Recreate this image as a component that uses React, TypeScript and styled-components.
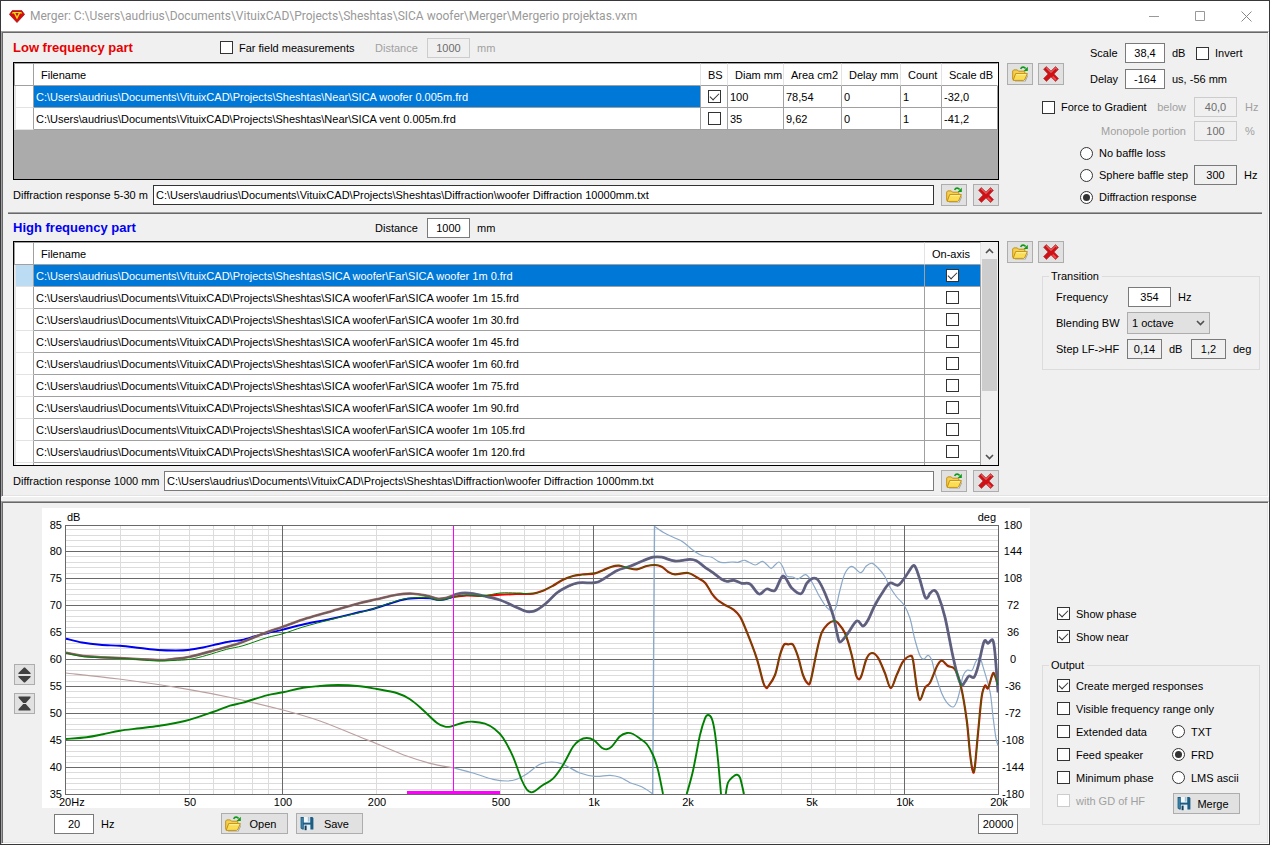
import React from "react";
import styled, { createGlobalStyle, css } from "styled-components";

const Global = createGlobalStyle`
  *, *::before, *::after { box-sizing: border-box; }
  body { margin: 0; background: #3a3a3e; }
  body, button, input, select, fieldset, table {
    font-family: "Liberation Sans", Arial, sans-serif;
    font-size: 11px;
    line-height: 14px;
    color: #000;
  }
`;

/* ---------- window frame ---------- */

const Window = styled.div`
  display: flex;
  flex-direction: column;
  min-height: 100vh;
  padding: 1px;
  background: #38383c;
`;

const TitleBar = styled.header`
  display: flex;
  align-items: center;
  height: 30px;
  padding-left: 8px;
  background: #fff;
`;

const Title = styled.h1`
  flex: 1;
  margin: 0 0 0 5px;
  font: 400 12px/16px Roboto, "Noto Sans", sans-serif;
  color: #999;
  white-space: nowrap;
`;

const CaptionButton = styled.button`
  display: flex;
  align-items: center;
  justify-content: center;
  width: 46px;
  height: 30px;
  padding: 0;
  border: 0;
  background: none;
`;

const Panel = styled.section`
  border: 1px solid;
  border-color: #a0a0a0 #fff #fff #a0a0a0;
  background: #f0f0f0;
  box-shadow: inset 1px 1px 0 #696969, inset -1px -1px 0 #e3e3e3;
`;

const Splitter = styled.div`
  height: 4px;
  background: #f0f0f0;
`;

const UpperPanel = styled(Panel)`
  padding: 1px;
`;

const Section = styled.section`
  display: flex;
  gap: 8px;
  padding: 0 6px 0 10px;
`;

const LowSection = styled(Section)`
  height: 179px;
`;

const HighSection = styled(Section)`
  height: 281px;
`;

const Divider = styled.hr`
  height: 2px;
  margin: 0 5px;
  border: 0;
  border-top: 1px solid #a0a0a0;
  background: #696969;
`;

const Main = styled.div`
  display: flex;
  flex: 1;
  flex-direction: column;
  min-width: 0;
`;

const Side = styled.aside`
  display: flex;
  flex-direction: column;
  width: 254px;
`;

const HeadRow = styled.div<{ $h: number }>`
  display: flex;
  align-items: center;
  height: ${(p) => p.$h}px;
`;

const Heading = styled.h2<{ $color: string; $w: number }>`
  width: ${(p) => p.$w}px;
  margin: 0;
  font-size: 13px;
  line-height: 16px;
  font-weight: 700;
  color: ${(p) => p.$color};
  white-space: nowrap;
`;

/* ---------- controls ---------- */

const tick = css`
  display: inline-grid;
  place-content: center;
  flex: none;
  width: 13px;
  height: 13px;
  margin: 0;
  appearance: none;
  border: 1px solid #333;
  background: #fff;
  &:disabled { border-color: #ccc; }
`;

const Check = styled.input.attrs({ type: "checkbox" })`
  ${tick}
  &:checked::after {
    content: "";
    width: 9px;
    height: 5px;
    margin-top: -3px;
    border: solid #333;
    border-width: 0 0 1px 1px;
    transform: rotate(-45deg);
  }
`;

const Radio = styled.input.attrs({ type: "radio" })`
  ${tick}
  border-radius: 50%;
  &:checked::after {
    content: "";
    width: 7px;
    height: 7px;
    border-radius: 50%;
    background: #333;
  }
`;

const Choice = styled.label<{ $off?: boolean; $w?: number }>`
  display: flex;
  align-items: center;
  gap: 6px;
  width: ${(p) => (p.$w ? p.$w + "px" : "auto")};
  color: ${(p) => (p.$off ? "#a0a0a0" : "#000")};
  white-space: nowrap;
`;

const Field = styled.input<{ $w?: number }>`
  width: ${(p) => p.$w ?? 43}px;
  height: 20px;
  padding: 0;
  border: 1px solid #7a7a7a;
  background: #fff;
  text-align: center;
  flex: none;
  &:read-only { background: #f0f0f0; }
  &:disabled { border-color: #ccc; background: #f0f0f0; color: #6d6d6d; }
`;

const PathField = styled.input<{ $dark?: boolean }>`
  flex: 1;
  min-width: 0;
  height: 20px;
  margin-right: 1px;
  padding: 0 2px;
  border: 1px solid ${(p) => (p.$dark ? "#333" : "#7a7a7a")};
  background: #fff;
`;

const Label = styled.label<{ $w?: number; $off?: boolean; $right?: boolean }>`
  width: ${(p) => (p.$w ? p.$w + "px" : "auto")};
  text-align: ${(p) => (p.$right ? "right" : "left")};
  color: ${(p) => (p.$off ? "#a0a0a0" : "#000")};
  white-space: nowrap;
`;

const Unit = styled.span<{ $off?: boolean; $w?: number }>`
  width: ${(p) => (p.$w ? p.$w + "px" : "auto")};
  margin-left: 7px;
  color: ${(p) => (p.$off ? "#a0a0a0" : "#000")};
  white-space: nowrap;
`;

const Button = styled.button<{ $w: number }>`
  display: flex;
  align-items: center;
  justify-content: center;
  flex: none;
  width: ${(p) => p.$w}px;
  height: 22px;
  padding: 0;
  border: 1px solid #adadad;
  background: #e1e1e1;
`;

const TextButton = styled(Button)`
  justify-content: flex-start;
  height: 21px;
  padding-left: 3px;
`;

const ButtonText = styled.span`
  flex: 1;
  padding-right: 4px;
  text-align: center;
`;

const ButtonPair = styled.div`
  display: flex;
  gap: 5px;
`;

const PathRow = styled.div`
  display: flex;
  align-items: center;
  gap: 6px;
  height: 22px;
  margin-top: 4px;
`;

/* ---------- data grids ---------- */

const GridBox = styled.div<{ $h: number }>`
  display: flex;
  height: ${(p) => p.$h}px;
  overflow: hidden;
  border: 1px solid #000;
  background: #ababab;
`;

const GridView = styled.div`
  flex: 1;
  min-width: 0;
  overflow: hidden;
`;

const Grid = styled.table`
  width: 100%;
  table-layout: fixed;
  border-collapse: separate;
  border-spacing: 0;
`;

const HeadCell = styled.th<{ $w?: number; $last?: boolean }>`
  width: ${(p) => (p.$w ? p.$w + "px" : "auto")};
  height: 23px;
  padding: 1px 0 0 7px;
  border-top: 1px solid #a0a0a0;
  border-right: 1px solid ${(p) => (p.$last ? "#fff" : "#e3e3e3")};
  border-bottom: 1px solid #a0a0a0;
  background: #fff;
  font-weight: 400;
  text-align: left;
  white-space: nowrap;
`;

const CornerCell = styled(HeadCell)`
  border-right-color: #a0a0a0;
  border-left: 1px solid #a0a0a0;
`;

const Cell = styled.td<{ $sel?: boolean; $mid?: boolean }>`
  height: 22px;
  padding: ${(p) => (p.$mid ? "0 0 1px" : "0 2px")};
  border-right: 1px solid #a0a0a0;
  border-bottom: 1px solid #a0a0a0;
  background: ${(p) => (p.$sel ? "#0078d7" : "#fff")};
  color: ${(p) => (p.$sel ? "#fff" : "#000")};
  text-align: ${(p) => (p.$mid ? "center" : "left")};
  white-space: nowrap;
  overflow: hidden;
  ${Check} { vertical-align: middle; }
`;

const RowHead = styled.td<{ $sel?: boolean }>`
  border-left: 2px solid #e3e3e3;
  border-right: 1px solid #a0a0a0;
  border-bottom: 1px solid #e3e3e3;
  background: ${(p) => (p.$sel ? "#bcdcf4" : "#fff")};
`;

const ScrollBar = styled.div`
  display: flex;
  flex-direction: column;
  width: 17px;
  background: #f0f0f0;
`;

const ScrollArrow = styled.button`
  display: flex;
  align-items: center;
  justify-content: center;
  height: 17px;
  padding: 0;
  border: 0;
  background: none;
`;

const ScrollTrack = styled.div`
  flex: 1;
`;

const ScrollThumb = styled.div`
  height: 132px;
  margin: 0 1px;
  background: #cdcdcd;
`;

/* ---------- side panels ---------- */

const TopRow = styled.div`
  display: flex;
  margin-top: 10px;
  ${ButtonPair} { margin-top: 20px; }
`;

const Levels = styled.div`
  display: flex;
  flex-direction: column;
  gap: 6px;
  margin-left: 26px;
`;

const Line = styled.div`
  display: flex;
  align-items: center;
  height: 20px;
`;

const Gradient = styled.div`
  display: grid;
  grid-template-columns: 144px 43px 1fr;
  row-gap: 4px;
  align-items: center;
  margin: 8px 0 1px 35px;
  column-gap: 8px;
`;

const GradientHead = styled.div`
  display: flex;
  justify-content: space-between;
`;

const Baffle = styled.div`
  display: grid;
  grid-template-columns: 114px 43px auto;
  grid-auto-rows: 22px;
  align-items: center;
  margin-left: 73px;
`;

const Group = styled.fieldset`
  min-width: 0;
  margin: 0;
  padding: 0;
  border: 1px solid #dcdcdc;
`;

const Legend = styled.legend`
  margin-left: 6px;
  padding: 0 3px 0 2px;
  line-height: 13px;
`;

const Transition = styled(Group)`
  height: 100px;
  margin: 7px 1px 0 35px;
`;

const TransitionLines = styled.div`
  display: grid;
  grid-auto-rows: 22px;
  row-gap: 4px;
  margin: 4px 0 0 13px;
`;

const SelectBox = styled.span`
  display: grid;
  align-items: center;
  width: 83px;
  height: 22px;
  border: 1px solid #adadad;
  background: #e1e1e1;
  svg, select { grid-area: 1 / 1; }
  svg { justify-self: end; margin-right: 4px; pointer-events: none; }
`;

const Select = styled.select`
  width: 100%;
  height: 20px;
  padding: 0 4px;
  border: 0;
  appearance: none;
  background: none;
`;

/* ---------- lower panel ---------- */

const LowerPanel = styled(Panel)`
  display: flex;
  flex: 1;
  padding: 6px 8px 8px 12px;
  align-items: flex-start;
`;

const ZoomButtons = styled.div`
  display: flex;
  flex-direction: column;
  gap: 8px;
  width: 28px;
  margin-top: 156px;
`;

const SquareButton = styled(Button)`
  height: 21px;
`;

const ChartArea = styled.div`
  flex: 1;
  min-width: 0;
  margin-right: 12px;
`;

const ChartSvg = styled.svg`
  display: block;
  width: 100%;
  background: #fff;
  text { font-size: 11px; fill: #000; }
`;

const ChartFoot = styled.div`
  display: flex;
  align-items: center;
  height: 21px;
  margin-top: 5px;
  padding: 0 12px;
`;

const FileButtons = styled.div`
  display: flex;
  flex: 1;
  gap: 8px;
  margin-left: 107px;
`;

const Options = styled.aside`
  width: 218px;
  padding-top: 94px;
`;

const ShowList = styled.div`
  display: grid;
  grid-auto-rows: 23px;
  align-items: center;
  margin: 0 0 11px 15px;
`;

const Output = styled(Group)`
  height: 166px;
`;

const OutputGrid = styled.div`
  display: grid;
  grid-template-columns: 115px auto;
  grid-auto-rows: 23px;
  align-items: center;
  margin: 2px 0 0 14px;
`;

const Wide = styled.div`
  grid-column: 1 / 3;
`;

const MergeSlot = styled.div`
  padding: 6px 0 0 1px;
`;

/* ---------- icons ---------- */

const FolderIcon = () => (
  <svg width="17" height="16" viewBox="0 0 17 16" aria-hidden="true">
    <path d="M3 14.9H12.6L16 8.6v1.6L13.6 15.6H3Z" fill="#a8a8a8" />
    <path d="M.7 13.6V5L1.7 3.9h3.6l1.2 1.3h6.3v2.2" fill="#f3cf55" stroke="#c4920f" />
    <path d="M3.6 7.6H15.4L12.9 13.2 11.6 14.4H1.2Z" fill="#fbdc55" stroke="#c4920f" strokeLinejoin="round" />
    <path d="M4.3 8.7h9.6" stroke="#fff3a6" />
    <path d="M8.6 2.8C9.8.6 12.2.6 13.6 2.4" fill="none" stroke="#0d9a16" strokeWidth="1.6" />
    <path d="M15.8.8v4.2h-4.2Z" fill="#0d9a16" />
  </svg>
);

const DeleteIcon = () => (
  <svg width="18" height="18" viewBox="0 0 18 18" aria-hidden="true">
    <path
      d="M4.2 1.6 9 6 13.6 1.6 16.4 4.4 12.1 9l4.4 4.6-2.9 2.9L9 12.1 4.4 16.4 1.6 13.6 6 9 1.6 4.3Z"
      fill="#cf1015"
      stroke="#b5474a"
      strokeWidth=".9"
      strokeLinejoin="round"
    />
    <path d="M4.2 2.8 9 7.3l4.6-4.4 1.4 1.4" fill="none" stroke="#e05a5c" strokeWidth="1.2" />
    <path d="M14 15 10.6 11.6" stroke="#f4474a" strokeWidth="1.8" />
  </svg>
);

const SaveIcon = () => (
  <svg width="14" height="15" viewBox="0 0 14 15" aria-hidden="true">
    <path d="M1 1h11.4L13.4 2v11.6H2.2L.6 12.2V1.4Z" fill="#1c5d85" />
    <path d="M1.6 2v9.8l1 .8V2Z" fill="#4f94bb" />
    <path d="M3.8 1h6.4v5.6H3.8Z" fill="#f2f7fa" />
    <path d="M7.8 1h1.8v4.6H7.8Z" fill="#a8c4d4" />
    <path d="M3.8 8.6h6.6v5.6H3.8Z" fill="#e4eef4" />
    <path d="M4.6 9.6h2v4.6h-2Z" fill="#153c56" />
  </svg>
);

const SpreadIcon = () => (
  <svg width="13" height="16" viewBox="0 0 13 16" aria-hidden="true">
    <path d="M6 .5h1L12.6 6v1H.4V6ZM.4 9h12.2v1L7 15.5H6L.4 10Z" fill="#404040" />
  </svg>
);

const SqueezeIcon = () => (
  <svg width="13" height="15" viewBox="0 0 13 15" aria-hidden="true">
    <path d="M.5.5h12v1.3L7.8 7H5.2L.5 1.8ZM5.2 8h2.6l4.7 5.2v1.3H.5v-1.3Z" fill="#404040" />
  </svg>
);

const AppIcon = () => (
  <svg width="16" height="13" viewBox="0 0 16 13" aria-hidden="true">
    <path d="M3.2.6h9.6L15.6 4.4 8 12.6.4 4.4Z" fill="#d40c0c" stroke="#8d0606" strokeWidth=".6" />
    <path d="M3.8 2h8.4l1.2 1.6H11L8 9.6 5 3.6H2.6Z" fill="#f3d81c" />
    <path d="M6.4 3h3.2L8 6.6Z" fill="#c80f0f" />
  </svg>
);

const Chevron = ({ up }: { up?: boolean }) => (
  <svg width="9" height="6" viewBox="0 0 9 6" aria-hidden="true">
    <path d={up ? "M1 5 4.5 1.5 8 5" : "M1 1 4.5 4.5 8 1"} fill="none" stroke="#505050" strokeWidth="1.6" />
  </svg>
);

/* ---------- response chart ---------- */

type Pt = [number, number];

const PLOT = { left: 65, right: 998, top: 525, bottom: 794 };
const DECADE = 311;
const xOf = (hz: number) => PLOT.left + DECADE * Math.log10(hz / 20);
const yOf = (db: number) => (db === 85 ? PLOT.top : PLOT.bottom - (db - 35) * 5.4);

const parse = (s: string): Pt[] =>
  s.trim().split(/\s+/).map((p) => p.split(",").map(Number) as Pt);

/* Catmull-Rom spline through the sampled points */
const smooth = (s: string) => {
  const p = parse(s);
  let d = `M${p[0][0]} ${p[0][1]}`;
  for (let i = 0; i < p.length - 1; i++) {
    const a = p[Math.max(i - 1, 0)];
    const b = p[i];
    const c = p[i + 1];
    const e = p[Math.min(i + 2, p.length - 1)];
    const n = (v: number) => v.toFixed(1);
    d += `C${n(b[0] + (c[0] - a[0]) / 6)} ${n(b[1] + (c[1] - a[1]) / 6)} ${n(c[0] - (e[0] - b[0]) / 6)} ${n(
      c[1] - (e[1] - b[1]) / 6
    )} ${c[0]} ${c[1]}`;
  }
  return d;
};

const highLeft = smooth(
  "66,638.7 82,642.5 100,644.7 120,645.8 140,648 158,650 176,650.5 188,650 203,647.5 218,644 230,641.5 242,640 256,636 268,633 282,629.8 305,624 333,618.5 360,612 373,609 390,603.5 405,599.3 420,598 430,598.3 440,600 453,597"
);
const nearLeft = smooth(
  "66,653.3 86.7,657 119,658.3 140,659.8 158,661 173,660.5 190,659.3 206.7,655.3 226.7,649.3 243,645.7 266.7,637.7 283,633.7 303,627 333,619 360,612.5 373,609 390,603 405,598.7 420,597.4 430,598 440,600.3 453,597"
);
const mergedLeft = smooth(
  "66,652.7 86.7,656.3 119,658 158,660 173,659 190,656.7 213,650.7 240,643 266.7,632.3 283,626.7 306.7,618.3 333,610.7 360,603 376.7,599.3 396.7,594.7 413,593.7 426.7,595.7 438,598.7 446.7,597.7 453,595.5"
);
const mergedRight = smooth(
  "453,595.5 456.7,594 465,593 473,593.7 486.7,596.7 500,600 513,605.7 525,611 530.7,611.7 536.7,610 546.7,602.7 556.7,593 566.7,587 578,582.9 595,582.7 603,579.3 616.7,570.7 630,566.3 643,560.7 653,557.2 661.7,557.2 675,561 690,559.3 696.7,561 705,567.3 713,572.7 721.7,579.3 727,581.3 734,580.3 741.7,583.3 750,584 759,594 766.7,589 775,590.3 783,576 791.7,588 801,593.7 806.7,583.3 812.7,578.3 818,580 825,593.3 833,615 837,633 840,642 846.7,635 856.7,621 863,626 868,620 875,605 883,591.7 890,583 898,585.3 905,577.3 912.7,566 916,568.3 920,580 925,597 928,597 930,593.3 934,590.3 938,595 945,617.3 953,656.7 958,676.7 961.7,685 965,681.7 969,676 974,677.3 978,666.7 984,641.7 988,643.3 992.7,640 995,653.3 998,692.3"
);
const lowHead = "453,597 466.7,595.3 483,596";
const lowTail =
  "533,593.7 543,590.7 553,585.7 563,579.7 573,576 582,574.5 595,573.3 603,570.3 611.7,566.7 619,565.7 628,568 637,569.3 646.7,566 655,565 661.7,566.7 668,571.7 675,574.3 688,573 696.7,577.3 705,582.7 711.7,593.3 716.7,599.3 725,605 733,609.3 740,616.7 746.7,631.7 756.7,658.3 763,681.7 766,687.5 768,686.7 775,675 780,655 784,644.7 788.5,644.4 793,644.7 798,656.7 803,675 807.7,683.3 810.7,680.7 816.7,651.7 821.7,632.7 828,624 834,621 838,623 845,633.3 851.7,655 856,675 859,679.3 861.7,675 866.7,658.3 872,653 878,657.7 885,673.3 890.7,688 896.7,675 903,661.7 910,656 913,660 916.7,686.7 920,700 925,687.7 930,682.7 936.7,666.7 941.7,660.7 948,666 955,669.3 961,686.7 966.7,720 970,753.3 972.7,770.7 974.7,768 978,733.3 981.7,696.7 985,685.7 988,688.3 991.7,676.7 994,673.3 998,685";
const lowRight = smooth(`${lowHead} 500,594.7 516.7,594 ${lowTail}`);
const nearRight = smooth(`${lowHead} 500,593 516.7,593 ${lowTail}`);
const green = [
  "66,739 86.7,737.3 103,734.3 120,730.7 140,728.3 158,726 176.7,722.7 190,719.7 213,712 230,705.7 243,702.7 266.7,695.3 283,692.3 303,687.7 320,686 338,685 360,686.3 376.7,689 396.7,693 410,699.3 423,710 436.7,722.7 445,726.7 451.7,726.3 463,722.7 473,721.7 485,723.7 495,729.3 503,737.7 513,756.7 521.7,780 526.7,789.3 531,792.3 535,791 543,785 553,778.7 563,765 573,746.7 580,740 586.7,738 594,740.3 601.7,747.7 606.7,749.3 611.7,746.7 620,736.3 627,733 633,734 640,738.7 646.7,744 653,755 658,770 663,794",
  "686.7,794 693,770.7 700,735 705,718.3 708,715 711.7,718.3 715,733.3 718,760 721,794",
  "725.7,794 728,782.7 733,776.7 736.7,774.7 740,777.7 744,794",
].map(smooth);
const phaseLow = smooth(
  "66,673 119,679 188,689.3 233,698 283,710 320,721 360,737 376.7,743.7 406.7,756 430,763.3 453,767.7"
);
const phaseMid = smooth(
  "453,767.7 473,773 493,779.3 506.7,781 516.7,779.3 526.7,774 540,764.3 551.7,762 563,764.3 580,773 595,776.3 610,775.3 620,777.3 630,782.7 641.7,786.7 652.7,793.7"
);
const phaseHigh = smooth(
  "655,526.7 665,533.3 676.7,538.7 683,542 695,551.7 703,555.7 711.7,557.3 718,561.3 723,562.7 731.7,562 738,562.3 745,560.3 755,565 762.7,561.3 770.7,568.3 775,565 779,562 782.7,566.7 786.7,576 792.7,577 798,579 805.7,574.7 811.7,581.7 820,597.3 826.7,607.3 833,611 836,607 840,590 845,573.3 851.7,566.3 860.7,572.7 866,566.3 872,563.3 878,568 885,576.7 890,587.3 896.7,597 904,605 910,618.3 915,640 920,655.7 924,659 928,655.3 931.7,660 935,673.3 941.7,693.3 946.7,702.3 953,707 956.7,701.7 960,690 963,676 967,670.3 972,670.3 975.7,661.7 980,658 983,666.7 990,691.7 993,716.7 995.7,736.7 998,745.7"
);

const dbTicks = Array.from({ length: 51 }, (_, i) => 35 + i);
const hzTicks = [10, 100, 1000, 10000]
  .flatMap((base) => [1, 2, 3, 4, 5, 6, 7, 8, 9].map((m) => m * base))
  .filter((hz) => hz >= 20 && hz <= 20000);
const isDecade = (hz: number) => [20, 100, 1000, 10000, 20000].includes(hz);
const hzLabels: [number, string][] = [
  [50, "50"], [100, "100"], [200, "200"], [500, "500"], [1000, "1k"],
  [2000, "2k"], [5000, "5k"], [10000, "10k"], [20000, "20k"],
];

const Chart = () => {
  const hLine = (db: number) => {
    const y = Math.round(yOf(db)) + 0.5;
    return <path key={db} d={`M${PLOT.left} ${y}H${PLOT.right + 1}`} stroke={db % 5 ? "#dcdcdc" : "#696969"} />;
  };
  const vLine = (hz: number) => {
    const x = Math.round(xOf(hz)) + 0.5;
    return <path key={hz} d={`M${x} ${PLOT.top}V${PLOT.bottom + 1}`} stroke={isDecade(hz) ? "#696969" : "#dcdcdc"} />;
  };
  return (
    <ChartSvg viewBox="42 508 988 300" role="img" aria-label="Frequency response">
      <defs>
        <clipPath id="plot">
          <rect x={PLOT.left} y={PLOT.top} width={PLOT.right - PLOT.left + 1} height={PLOT.bottom - PLOT.top} />
        </clipPath>
      </defs>
      {dbTicks.filter((d) => d % 5).map(hLine)}
      {hzTicks.filter((h) => !isDecade(h)).map(vLine)}
      {dbTicks.filter((d) => d % 5 === 0).map(hLine)}
      {hzTicks.filter(isDecade).map(vLine)}
      <g clipPath="url(#plot)" fill="none" strokeLinejoin="round">
        <path d={phaseLow} stroke="#bca0a0" strokeWidth="1.2" />
        <path d={phaseMid} stroke="#8aa8c8" strokeWidth="1.2" />
        <path d="M652.7 794 654.5 526" stroke="#8aa8c8" strokeWidth="1.4" />
        <path d={phaseHigh} stroke="#8aa8c8" strokeWidth="1.2" />
        {green.map((d, i) => (
          <path key={i} d={d} stroke="#008000" strokeWidth="1.9" />
        ))}
        <path d={highLeft} stroke="#0000f0" strokeWidth="1.9" />
        <path d={lowRight} stroke="#f00000" strokeWidth="2.2" />
        <path d={mergedLeft} stroke="#b06464" strokeWidth="2.6" />
        <path d={mergedLeft} stroke="#656060" strokeWidth="1.6" />
        <path d={mergedRight} stroke="#6464b0" strokeWidth="2.8" />
        <path d={mergedRight} stroke="#606068" strokeWidth="1.7" />
        <path d={nearLeft} stroke="#008000" strokeWidth="1" />
        <path d={nearRight} stroke="#008000" strokeWidth="1" />
      </g>
      <rect x="453" y="526" width="1" height="265" fill="#ff00ff" />
      <rect x="407" y="791" width="93" height="3" fill="#ff00ff" />
      <text x="67" y="521">dB</text>
      <text x="996" y="521" textAnchor="end">deg</text>
      {dbTicks.filter((d) => d % 5 === 0).map((d) => (
        <text key={d} x="62" y={Math.round(yOf(d)) + 4} textAnchor="end">{d}</text>
      ))}
      {dbTicks.filter((d) => d % 5 === 0).map((d) => (
        <text key={d} x="1013" y={Math.round(yOf(d)) + 4} textAnchor="middle">{((d - 60) * 36) / 5}</text>
      ))}
      <text x="59" y="806">20Hz</text>
      {hzLabels.map(([hz, t]) => (
        <text key={hz} x={Math.round(xOf(hz)) + 1} y="806" textAnchor="middle">{t}</text>
      ))}
    </ChartSvg>
  );
};

/* ---------- data ---------- */

const ROOT = "C:\\Users\\audrius\\Documents\\VituixCAD\\Projects\\Sheshtas";

const nearFiles = [
  { file: "SICA woofer 0.005m.frd", bs: true, values: ["100", "78,54", "0", "1", "-32,0"] },
  { file: "SICA vent 0.005m.frd", bs: false, values: ["35", "9,62", "0", "1", "-41,2"] },
];
const nearColumns: [string, number][] = [
  ["Diam mm", 56], ["Area cm2", 58], ["Delay mm", 59], ["Count", 41], ["Scale dB", 56],
];
const farAngles = [0, 15, 30, 45, 60, 75, 90, 105, 120];

const OpenDelete = ({ what }: { what: string }) => (
  <>
    <Button $w={26} aria-label={`Open ${what}`}><FolderIcon /></Button>
    <Button $w={26} aria-label={`Delete ${what}`}><DeleteIcon /></Button>
  </>
);

const LowPart = () => (
  <LowSection>
    <Main>
      <HeadRow $h={29}>
        <Heading $color="#e60000" $w={207}>Low frequency part</Heading>
        <Choice $w={155}><Check /> Far field measurements</Choice>
        <Label $off htmlFor="lf-dist" $w={52}>Distance</Label>
        <Field id="lf-dist" disabled defaultValue="1000" />
        <Unit $off>mm</Unit>
      </HeadRow>
      <GridBox $h={118}>
        <GridView>
          <Grid>
            <thead>
              <tr>
                <CornerCell $w={20} aria-label="Row" />
                <HeadCell>Filename</HeadCell>
                <HeadCell $w={27}>BS</HeadCell>
                {nearColumns.map(([name, w], i) => (
                  <HeadCell key={name} $w={w} $last={i === 4}>{name}</HeadCell>
                ))}
              </tr>
            </thead>
            <tbody>
              {nearFiles.map((f, i) => (
                <tr key={f.file}>
                  <RowHead />
                  <Cell $sel={i === 0}>{`${ROOT}\\Near\\${f.file}`}</Cell>
                  <Cell $mid><Check defaultChecked={f.bs} aria-label="BS" /></Cell>
                  {f.values.map((v, k) => <Cell key={k}>{v}</Cell>)}
                </tr>
              ))}
            </tbody>
          </Grid>
        </GridView>
      </GridBox>
      <PathRow>
        <Label htmlFor="lf-path" $w={134}>Diffraction response 5-30 m</Label>
        <PathField id="lf-path" $dark defaultValue={`${ROOT}\\Diffraction\\woofer Diffraction 10000mm.txt`} />
        <OpenDelete what="near diffraction" />
      </PathRow>
    </Main>
    <Side>
      <TopRow>
        <ButtonPair><OpenDelete what="near files" /></ButtonPair>
        <Levels>
          <Line>
            <Label htmlFor="scale" $w={35}>Scale</Label>
            <Field id="scale" $w={40} defaultValue="38,4" />
            <Unit $w={17}>dB</Unit>
            <Unit><Choice><Check /> Invert</Choice></Unit>
          </Line>
          <Line>
            <Label htmlFor="delay" $w={35}>Delay</Label>
            <Field id="delay" $w={40} defaultValue="-164" />
            <Unit>us, -56 mm</Unit>
          </Line>
        </Levels>
      </TopRow>
      <Gradient>
        <GradientHead>
          <Choice><Check /> Force to Gradient</Choice>
          <Label $off htmlFor="below">below</Label>
        </GradientHead>
        <Field id="below" disabled defaultValue="40,0" />
        <Label $off as="span">Hz</Label>
        <Label $off $right htmlFor="mono">Monopole portion</Label>
        <Field id="mono" disabled defaultValue="100" />
        <Label $off as="span">%</Label>
      </Gradient>
      <Baffle>
        <Wide><Choice><Radio name="baffle" /> No baffle loss</Choice></Wide>
        <span />
        <Choice><Radio name="baffle" /> Sphere baffle step</Choice>
        <Field aria-label="Sphere baffle step frequency" readOnly defaultValue="300" />
        <Unit>Hz</Unit>
        <Wide><Choice><Radio name="baffle" defaultChecked /> Diffraction response</Choice></Wide>
      </Baffle>
    </Side>
  </LowSection>
);

const HighPart = () => (
  <HighSection>
    <Main>
      <HeadRow $h={27}>
        <Heading $color="#0000f0" $w={362}>High frequency part</Heading>
        <Label htmlFor="hf-dist" $w={52}>Distance</Label>
        <Field id="hf-dist" defaultValue="1000" />
        <Unit>mm</Unit>
      </HeadRow>
      <GridBox $h={225}>
        <GridView>
          <Grid>
            <thead>
              <tr>
                <CornerCell $w={20} aria-label="Row" />
                <HeadCell>Filename</HeadCell>
                <HeadCell $w={56}>On-axis</HeadCell>
              </tr>
            </thead>
            <tbody>
              {farAngles.map((a, i) => (
                <tr key={a}>
                  <RowHead $sel={i === 0} />
                  <Cell $sel={i === 0}>{`${ROOT}\\SICA woofer\\Far\\SICA woofer 1m ${a}.frd`}</Cell>
                  <Cell $sel={i === 0} $mid><Check defaultChecked={i === 0} aria-label="On-axis" /></Cell>
                </tr>
              ))}
              <tr>
                <RowHead />
                <Cell />
                <Cell />
              </tr>
            </tbody>
          </Grid>
        </GridView>
        <ScrollBar>
          <ScrollArrow aria-label="Scroll up"><Chevron up /></ScrollArrow>
          <ScrollTrack><ScrollThumb /></ScrollTrack>
          <ScrollArrow aria-label="Scroll down"><Chevron /></ScrollArrow>
        </ScrollBar>
      </GridBox>
      <PathRow>
        <Label htmlFor="hf-path" $w={145}>Diffraction response 1000 mm</Label>
        <PathField id="hf-path" defaultValue={`${ROOT}\\Diffraction\\woofer Diffraction 1000mm.txt`} />
        <OpenDelete what="far diffraction" />
      </PathRow>
    </Main>
    <Side>
      <HeadRow $h={27} />
      <ButtonPair><OpenDelete what="far files" /></ButtonPair>
      <Transition>
        <Legend>Transition</Legend>
        <TransitionLines>
          <Line>
            <Label htmlFor="freq" $w={72}>Frequency</Label>
            <Field id="freq" defaultValue="354" />
            <Unit>Hz</Unit>
          </Line>
          <Line>
            <Label htmlFor="blend" $w={71}>Blending BW</Label>
            <SelectBox>
              <Select id="blend"><option>1 octave</option></Select>
              <Chevron />
            </SelectBox>
          </Line>
          <Line>
            <Label htmlFor="step-db" $w={71}>Step LF-&gt;HF</Label>
            <Field id="step-db" $w={35} readOnly defaultValue="0,14" />
            <Unit $w={22}>dB</Unit>
            <Field aria-label="Step in degrees" $w={35} readOnly defaultValue="1,2" />
            <Unit>deg</Unit>
          </Line>
        </TransitionLines>
      </Transition>
    </Side>
  </HighSection>
);

const App = () => (
  <>
    <Global />
    <Window>
      <TitleBar>
        <AppIcon />
        <Title>{"Merger: C:\\Users\\audrius\\Documents\\VituixCAD\\Projects\\Sheshtas\\SICA woofer\\Merger\\Mergerio projektas.vxm"}</Title>
        <CaptionButton aria-label="Minimize">
          <svg width="11" height="11"><path d="M0 5.5H10" stroke="#999" /></svg>
        </CaptionButton>
        <CaptionButton aria-label="Maximize">
          <svg width="11" height="11"><path d="M.5.5h9v9h-9Z" fill="none" stroke="#999" /></svg>
        </CaptionButton>
        <CaptionButton aria-label="Close">
          <svg width="11" height="11"><path d="M.5.5l10 10M10.5.5l-10 10" stroke="#888" /></svg>
        </CaptionButton>
      </TitleBar>
      <UpperPanel>
        <LowPart />
        <Divider />
        <HighPart />
      </UpperPanel>
      <Splitter />
      <LowerPanel>
        <ZoomButtons>
          <SquareButton $w={21} aria-label="Expand scale"><SpreadIcon /></SquareButton>
          <SquareButton $w={21} aria-label="Compress scale"><SqueezeIcon /></SquareButton>
        </ZoomButtons>
        <ChartArea>
          <Chart />
          <ChartFoot>
            <Field $w={40} aria-label="Lowest frequency" defaultValue="20" />
            <Unit>Hz</Unit>
            <FileButtons>
              <TextButton $w={67}><FolderIcon /><ButtonText>Open</ButtonText></TextButton>
              <TextButton $w={67}><SaveIcon /><ButtonText>Save</ButtonText></TextButton>
            </FileButtons>
            <Field $w={40} aria-label="Highest frequency" defaultValue="20000" />
          </ChartFoot>
        </ChartArea>
        <Options>
          <ShowList>
            <Choice><Check defaultChecked /> Show phase</Choice>
            <Choice><Check defaultChecked /> Show near</Choice>
          </ShowList>
          <Output>
            <Legend>Output</Legend>
            <OutputGrid>
              <Wide><Choice><Check defaultChecked /> Create merged responses</Choice></Wide>
              <Wide><Choice><Check /> Visible frequency range only</Choice></Wide>
              <Choice><Check /> Extended data</Choice>
              <Choice><Radio name="format" /> TXT</Choice>
              <Choice><Check /> Feed speaker</Choice>
              <Choice><Radio name="format" defaultChecked /> FRD</Choice>
              <Choice><Check /> Minimum phase</Choice>
              <Choice><Radio name="format" /> LMS ascii</Choice>
              <Choice $off><Check disabled /> with GD of HF</Choice>
              <MergeSlot>
                <TextButton $w={67}><SaveIcon /><ButtonText>Merge</ButtonText></TextButton>
              </MergeSlot>
            </OutputGrid>
          </Output>
        </Options>
      </LowerPanel>
    </Window>
  </>
);

export default App;
